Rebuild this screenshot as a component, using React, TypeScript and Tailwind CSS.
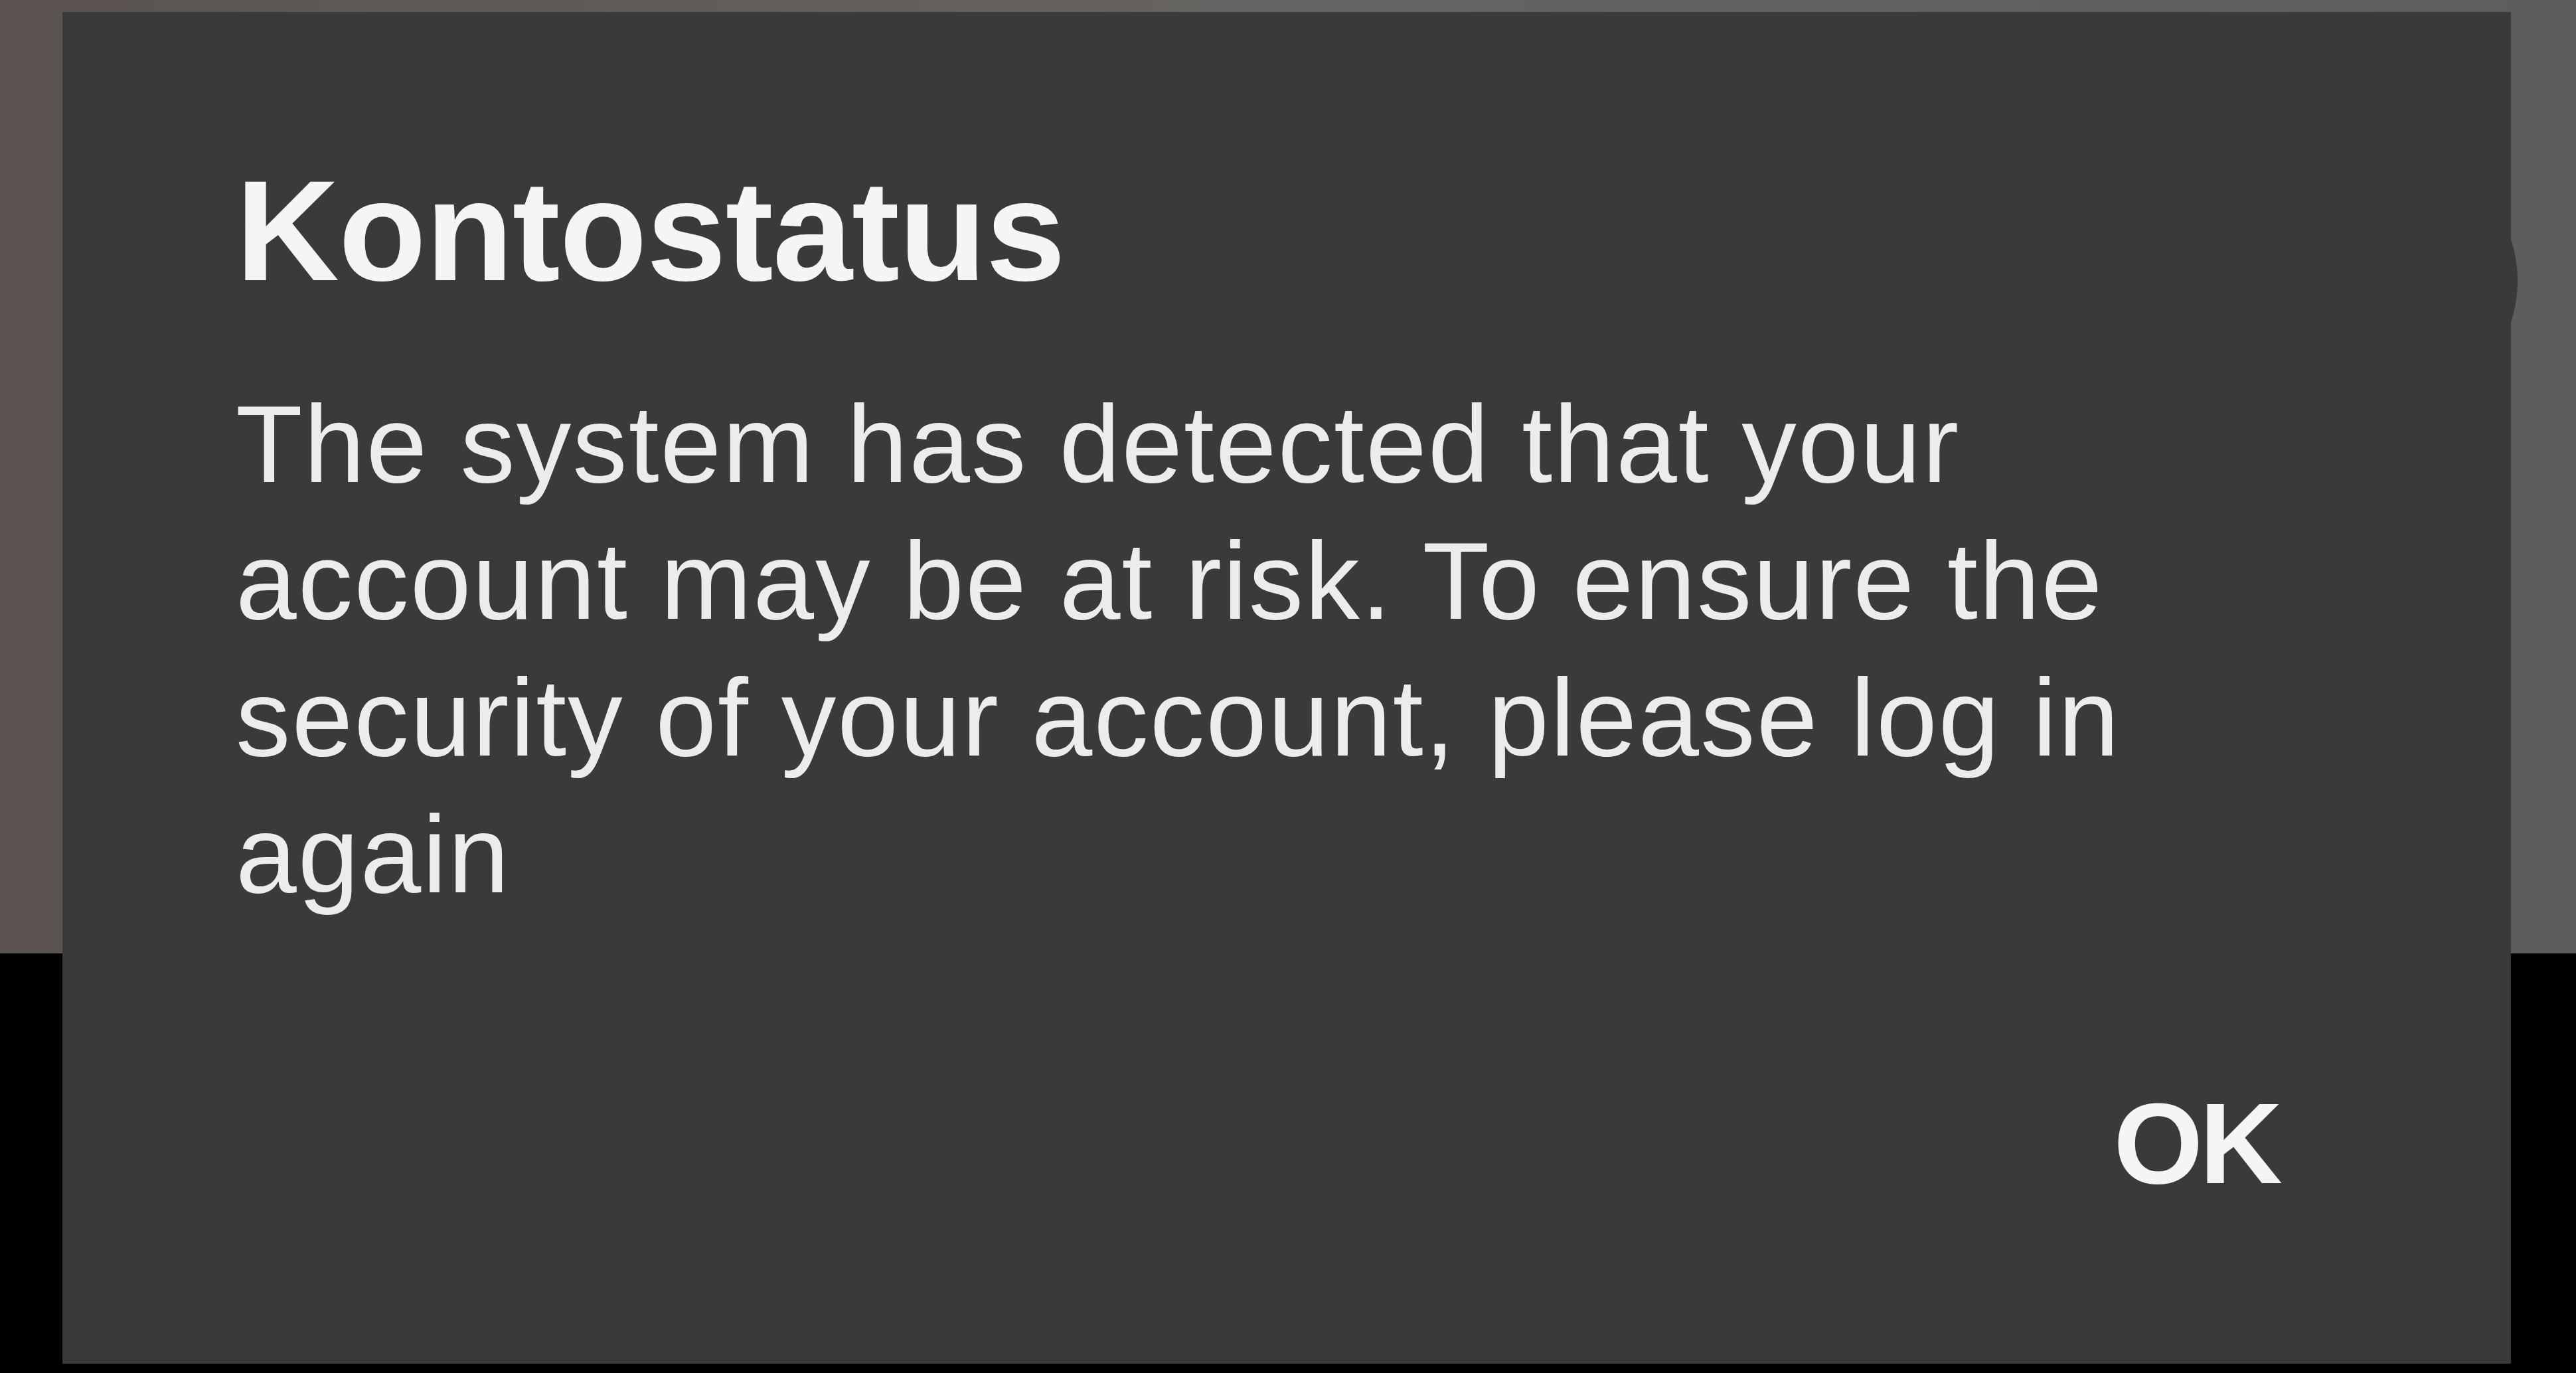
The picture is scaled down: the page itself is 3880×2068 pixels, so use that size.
export default function App() {
  return (
    <div className="relative w-[3880px] h-[2068px] overflow-hidden bg-black font-['Liberation_Sans',Arial,sans-serif]">

      {/* blurred photo behind the dialog */}
      <div className="h-[1436px] w-full bg-gradient-to-r from-[#5a534f] via-[#666462] to-[#5e5d5d]" />

      {/* round shape peeking out at the right edge */}
      <div className="absolute left-[3392px] top-[223px] w-[400px] h-[400px] rounded-full bg-[#3a3a3a]" />

      {/* dialog */}
      <div className="absolute left-[94px] top-[18px] w-[3688px] h-[2036px] bg-[#3a3a3a] flex flex-col px-[261px] pt-[221px]">

        <h1 className="text-[216px] leading-[216px] font-bold text-[#f5f5f5] tracking-[-1px]">
          Kontostatus
        </h1>

        <p className="mt-[111px] text-[165px] leading-[206px] text-[#ececec] tracking-[2px]">
          The system has detected that your account may be at risk. To ensure the security of your account, please log in again
        </p>

        <div className="mt-[246px] flex justify-end pr-[88px]">
          <button className="text-[173px] leading-[173px] font-bold text-[#f5f5f5] tracking-[-5px]">
            OK
          </button>
        </div>

      </div>
    </div>
  );
}
